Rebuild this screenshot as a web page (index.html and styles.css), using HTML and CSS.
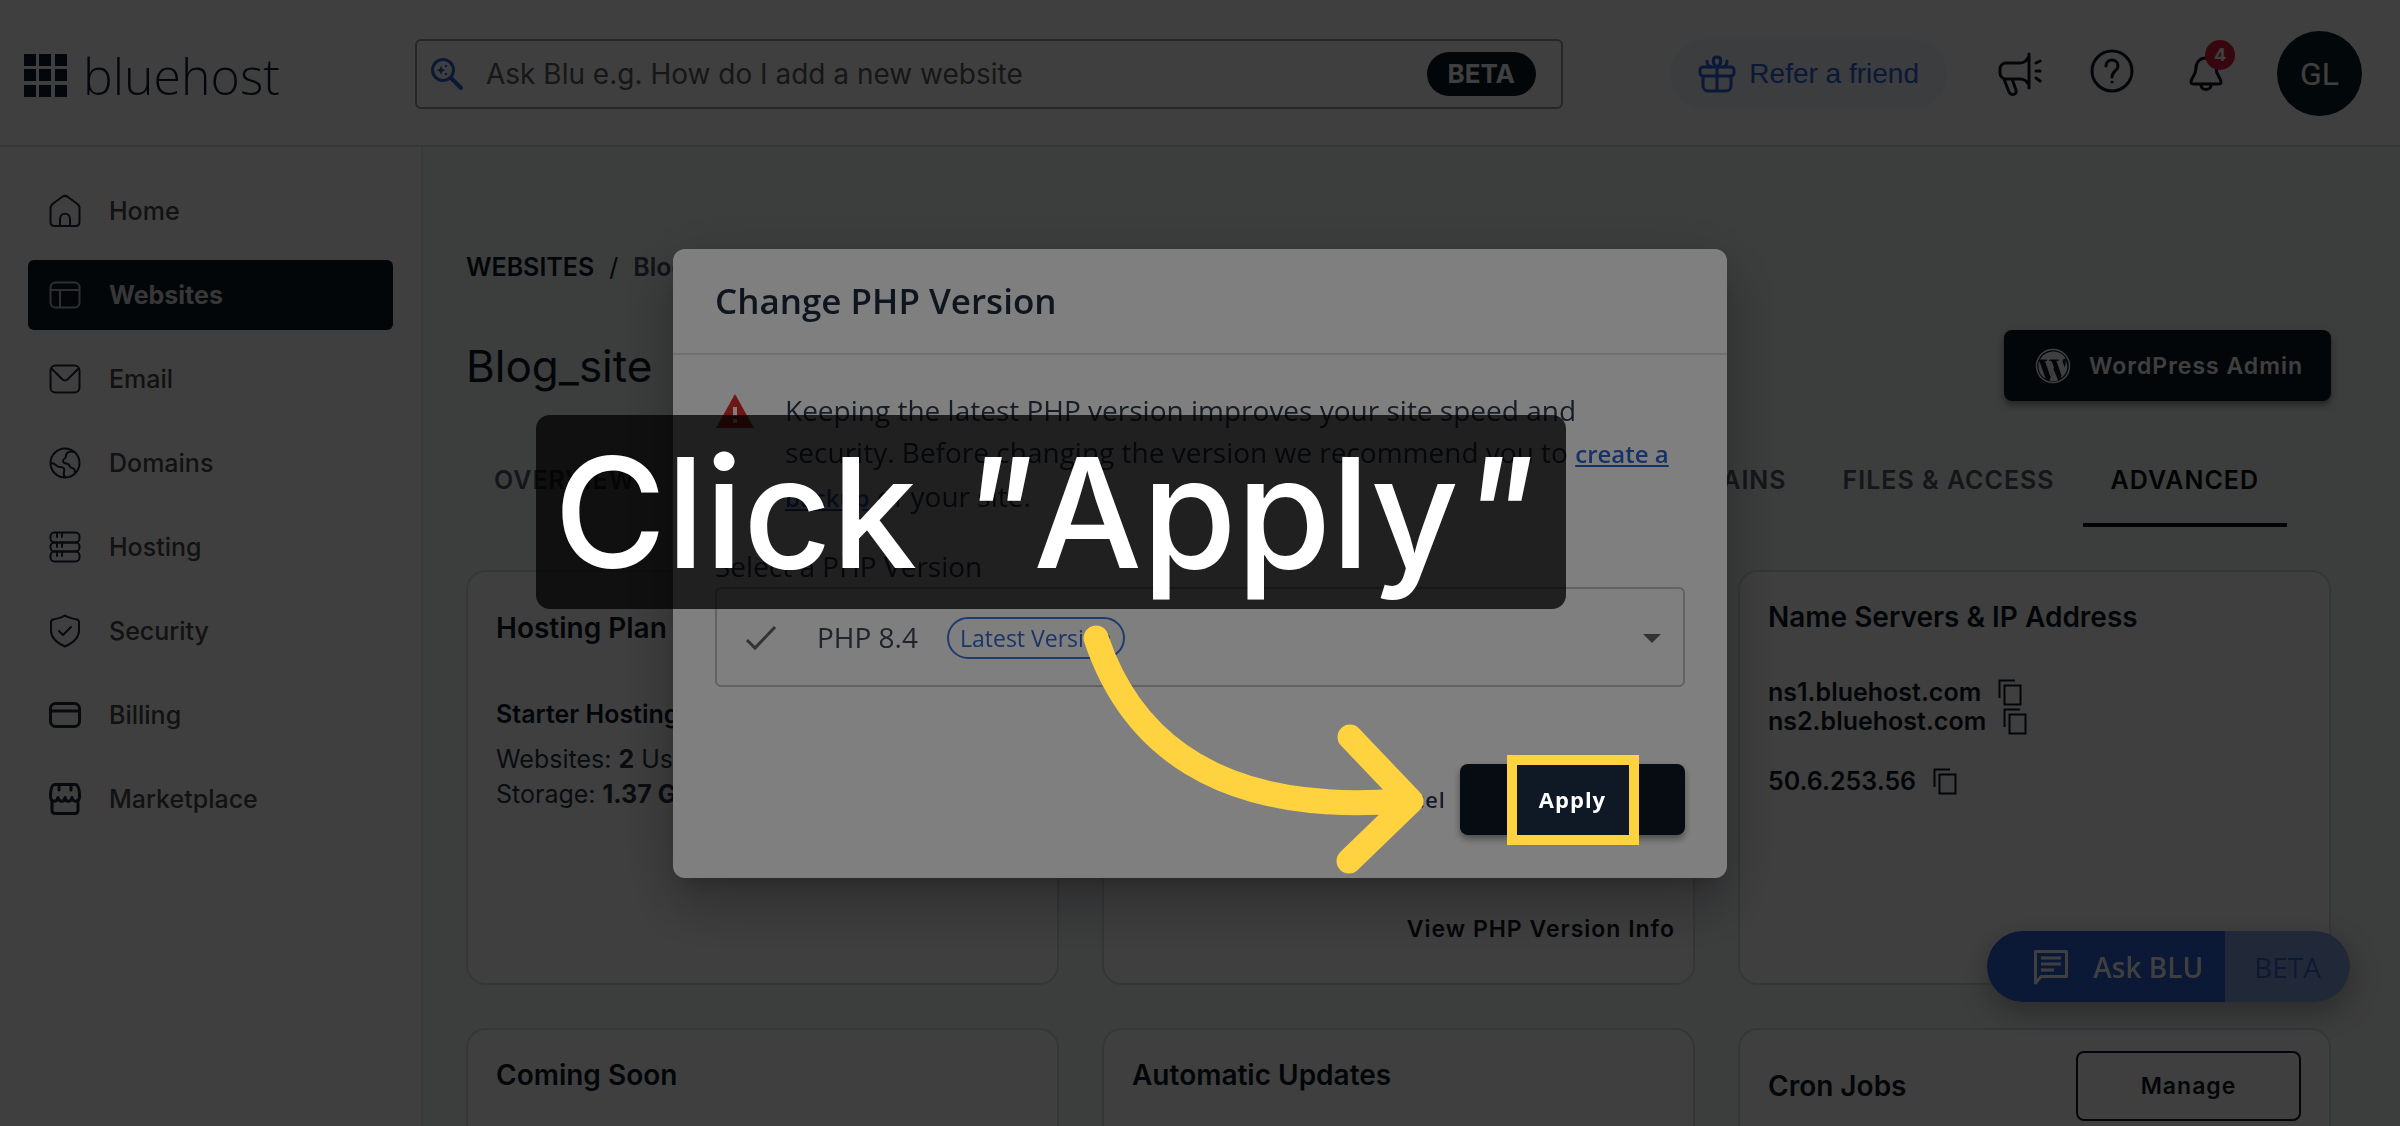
FILE: index.html
```html
<!DOCTYPE html>
<html lang="en">
<head>
  <meta charset="UTF-8" />
  <meta name="viewport" content="width=device-width, initial-scale=1.0" />
  <title>Blog_site - Advanced | Bluehost</title>
  <link rel="stylesheet" href="styles.css">
</head>
<body>
  <!-- Top Bar -->
  <header class="topbar">
    <a class="logo" href="#">
      <svg width="43" height="43" viewBox="0 0 43 43" fill="currentColor">
        <path d="M0 0h12v12H0zM15 0h12v12H15zM31 0h12v12H31zM0 15h12v12H0zM15 15h12v12H15zM31 15h12v12H31zM0 31h12v12H0zM15 31h12v12H15zM31 31h12v12H31z"/>
      </svg>
      <span>bluehost</span>
    </a>
    <div class="search">
      <svg width="34" height="34" viewBox="0 0 34 34" fill="none" stroke="currentColor" stroke-width="3" stroke-linecap="round">
        <circle cx="13" cy="13" r="10.500"/>
        <path d="M21 21l10 10" stroke-width="4"/>
        <path d="M11 9l1.500 3 3 1.200-3 1.200-1.500 3-1.500-3-3-1.200 3-1.200z" fill="currentColor" stroke="none"/>
        <circle cx="16" cy="9" r="1.300" fill="currentColor" stroke="none"/>
        <circle cx="16" cy="17" r="1.300" fill="currentColor" stroke="none"/>
      </svg>
      <input type="text" aria-label="Ask Blu" placeholder="Ask Blu e.g. How do I add a new website">
      <span class="beta">BETA</span>
    </div>
    <div class="actions">
      <a class="refer" href="#">
        <svg width="38" height="38" viewBox="0 0 38 38" fill="none" stroke="currentColor" stroke-width="3" stroke-linecap="round" stroke-linejoin="round">
          <rect x="2" y="12" width="34" height="9" rx="3"/>
          <path d="M5 21v10a5 5 0 0 0 5 5h18a5 5 0 0 0 5-5V21M19 12v24M19 12c-5-3-5-10 0-10s5 7 0 10M13 12c-3-1-4-3-4-6M25 12c3-1 4-3 4-6"/>
        </svg>
        <span>Refer a friend</span>
      </a>
      <button class="icon-btn" aria-label="Announcements">
        <svg width="44" height="44" viewBox="0 0 44 44" fill="none" stroke="currentColor" stroke-width="3" stroke-linecap="round" stroke-linejoin="round">
          <path d="M31 2v34M31 4c-2 5-5 7-9 7H8a6 6 0 0 0-6 6v4a6 6 0 0 0 6 6h14c4 0 7 2 9 6M6 27l5 13c2 4 8 3 7-2l-4-11"/>
          <path d="M38 11l4-2M38 19h4M38 26l4 3"/>
        </svg>
      </button>
      <button class="icon-btn help" aria-label="Help">
        <svg width="44" height="44" viewBox="0 0 44 44" fill="none" stroke="currentColor" stroke-width="3" stroke-linecap="round">
          <circle cx="22" cy="22" r="20"/>
          <path d="M16 17c0-8 12-8 12 0 0 5-6 5-6 11"/>
          <circle cx="22" cy="33" r="1" fill="currentColor" stroke-width="1"/>
        </svg>
      </button>
      <button class="icon-btn bell" aria-label="Notifications">
        <svg width="34" height="36" viewBox="0 0 34 36" fill="none" stroke="currentColor" stroke-width="3" stroke-linejoin="round">
          <path d="M17 2c-6 0-10 4-10 10 0 7-5 10-5 14 0 2 1 2 3 2h24c2 0 3 0 3-2 0-4-5-7-5-14 0-6-4-10-10-10zM12 29c0 6 10 6 10 0"/>
        </svg>
        <span class="count">4</span>
      </button>
      <button class="avatar">GL</button>
    </div>
  </header>

  <div class="layout">
    <!-- Sidebar -->
    <nav class="sidebar">
      <a href="#">
        <svg viewBox="0 0 32 32"><path d="M1.500 13c0-2 1-3 2-4L13 2c2-1.500 4-1.500 6 0l9.500 7c1 1 2 2 2 4v14c0 2.500-1.500 4-4 4h-21c-2.500 0-4-1.500-4-4zM11 31v-7c0-7 10-7 10 0v7"/></svg>
        Home
      </a>
      <a href="#" class="active">
        <svg viewBox="0 0 32 32"><rect x="1.500" y="3.500" width="29" height="25" rx="5"/><path d="M2 11h28M11 11v17"/></svg>
        Websites
      </a>
      <a href="#">
        <svg viewBox="0 0 32 32"><rect x="1.500" y="2.500" width="29" height="27" rx="5"/><path d="M3 6l10 10c2 2 4 2 6 0L29 6"/></svg>
        Email
      </a>
      <a href="#">
        <svg viewBox="0 0 32 32"><circle cx="16" cy="16" r="14.500"/><path d="M2 16c5 0 5 4 9 4s5 2 4 5 0 4 1 5M25 5c-4-1-8 0-8 4s-3 2-3 5 3 2 5 3 1 4 4 4 3 3 3 5"/></svg>
        Domains
      </a>
      <a href="#">
        <svg viewBox="0 0 32 32"><rect x="1.500" y="1.500" width="29" height="10" rx="4"/><rect x="1.500" y="11.500" width="29" height="9" rx="4"/><rect x="1.500" y="20.500" width="29" height="10" rx="4"/><path d="M8 2v4M13 2v4M8 12v4M13 12v4M8 21v4M13 21v4"/></svg>
        Hosting
      </a>
      <a href="#">
        <svg viewBox="0 0 32 34"><path d="M16 1.500c4 3 8 3 12 4 1.500.5 2 1.500 2 3v8c0 7-5 12-14 16-9-4-14-9-14-16v-8c0-1.500.5-2.500 2-3 4-1 8-1 12-4zM10 17l4 4 8-8"/></svg>
        Security
      </a>
      <a href="#">
        <svg viewBox="0 0 32 32" class="bold"><rect x="1.500" y="4.500" width="29" height="23" rx="5"/><path d="M2 12h28"/></svg>
        Billing
      </a>
      <a href="#">
        <svg viewBox="0 0 32 32" class="bold"><path d="M6 1.500h20c3 0 4.500 5 4.500 12 0 6-7 6-7.500 1-1 5-6.500 5-7 0-.5 5-6 5-7 0-.5 5-7.500 5-7.500-1C1.500 6.500 3 1.500 6 1.500zM3 18v9c0 2.500 1 3.500 3 3.500h20c2 0 3-1 3-3.500v-9M10 2v5M22 2v5"/></svg>
        Marketplace
      </a>
    </nav>

    <!-- Site Page -->
    <main class="content">
      <div class="breadcrumb">
        <a href="#">WEBSITES</a><span class="slash">/</span><span class="current">Blog_site</span>
      </div>
      <div class="title-row">
        <h1>Blog_site</h1>
        <button class="btn-dark wp-btn">
          <svg width="36" height="36" viewBox="0 0 36 36">
            <circle cx="18" cy="18" r="16.500" fill="none" stroke="#fff" stroke-width="1.500"/>
            <path fill="#fff" d="M5 11.500a15 15 0 0 1 26-1c-3 0-4 2-3 4.500 2 4 1.500 6 .5 9l-1.500 5-5.500-16h2v-1.500h-9V13h2l2.500 6.500L15.500 29 10 13h2v-1.500zM3.500 17c0-1.500.3-3 .8-4l6.500 18A15 15 0 0 1 3.500 17zM18.500 21l4.500 11.500c-3 1-6 1-8.500.3zM30.500 12c3.500 7 1.500 14-5 18.500L30 18c.7-2 .8-4 .5-6z"/>
          </svg>
          WordPress Admin
        </button>
      </div>
      <div class="tabs">
        <a href="#">OVERVIEW</a>
        <a href="#" class="push">DOMAINS</a>
        <a href="#">FILES &amp; ACCESS</a>
        <a href="#" class="active">ADVANCED</a>
      </div>
      <div class="cards">
        <section class="card">
          <div class="card-header with-action"><h2>Hosting Plan</h2></div>
          <h3>Starter Hosting</h3>
          <p>Websites: <b>2</b> Used</p>
          <p>Storage: <b>1.37 GB</b></p>
        </section>
        <section class="card php-card">
          <a class="text-link" href="#">View PHP Version Info</a>
        </section>
        <section class="card">
          <div class="card-header"><h2>Name Servers &amp; IP Address</h2></div>
          <div class="servers">
            <div class="server">ns1.bluehost.com
              <button class="copy" aria-label="Copy"><svg viewBox="0 0 24 27"><path d="M1.500 19V1.500H17M6.500 6.500h16v19h-16z"/></svg></button>
            </div>
            <div class="server">ns2.bluehost.com
              <button class="copy" aria-label="Copy"><svg viewBox="0 0 24 27"><path d="M1.500 19V1.500H17M6.500 6.500h16v19h-16z"/></svg></button>
            </div>
            <div class="server ip">50.6.253.56
              <button class="copy" aria-label="Copy"><svg viewBox="0 0 24 27"><path d="M1.500 19V1.500H17M6.500 6.500h16v19h-16z"/></svg></button>
            </div>
          </div>
        </section>
        <section class="card">
          <div class="card-header"><h2>Coming Soon</h2></div>
        </section>
        <section class="card">
          <div class="card-header"><h2>Automatic Updates</h2></div>
        </section>
        <section class="card">
          <div class="card-header with-action">
            <h2>Cron Jobs</h2>
            <button class="btn-outline">Manage</button>
          </div>
        </section>
      </div>
    </main>
  </div>

  <button class="ask-blu">
    <span class="ask-main">
      <svg width="36" height="36" viewBox="0 0 36 36" fill="none" stroke="currentColor" stroke-width="3">
        <path d="M2.500 34V2.500h31v25H8z" stroke-linejoin="round"/>
        <path d="M8 9h20M8 15h20M8 21h13"/>
      </svg>
      Ask BLU
    </span>
    <span class="ask-beta">BETA</span>
  </button>

  <!-- PHP Version Dialog -->
  <div class="backdrop">
    <div class="dialog" role="dialog" aria-labelledby="dialogTitle">
      <h2 class="dialog-title" id="dialogTitle">Change PHP Version</h2>
      <div class="dialog-body">
        <div class="notice">
          <svg width="40" height="36" viewBox="0 0 40 36">
            <path fill="#e02b2b" d="M20 1l19 34H1z"/>
            <path fill="#fff" d="M18 14h4v9h-4zM18 26h4v4h-4z"/>
          </svg>
          <p>Keeping the latest PHP version improves your site speed and security. Before changing the version we recommend you to <a href="#">create a backup</a> of your site.</p>
        </div>
        <label for="phpVersion">Select a PHP Version</label>
        <div class="select-box">
          <select id="phpVersion">
            <option>PHP 8.4</option>
          </select>
          <svg class="check" width="32" height="26" viewBox="0 0 32 26" fill="none" stroke="#666" stroke-width="3"><path d="M2 15l8 8L30 2"/></svg>
          <span class="chip">Latest Version</span>
          <span class="caret"></span>
        </div>
      </div>
      <div class="dialog-footer">
        <button class="btn-text">Cancel</button>
        <button class="btn-dark apply">Apply</button>
      </div>

      <!-- Guide step drawn over the dialog -->
      <div class="guide">
        <div class="spotlight"></div>
        <div class="callout">Click <i>"</i>Apply<i>"</i></div>
        <svg class="arrow" viewBox="0 0 360 270" fill="none" stroke="#ffd23f" stroke-width="25" stroke-linecap="round" stroke-linejoin="round">
          <path d="M23 29c34 102 119 177 304 163"/>
          <path d="M277 128l61 64-62 60"/>
        </svg>
      </div>
    </div>
  </div>
</body>
</html>
```
FILE: styles.css
```css
* {
  margin: 0;
  padding: 0;
  box-sizing: border-box;
}
body {
  font-family: Inter, Arial, sans-serif;
  font-size: 25px;
  color: #0f1825;
  background: #f2f4f7;
  height: 100vh;
  display: flex;
  flex-direction: column;
  overflow: hidden;
}
a {
  color: inherit;
  text-decoration: none;
}
button {
  font: inherit;
  color: inherit;
  background: none;
  border: none;
  cursor: pointer;
}
/* Top Bar */
.topbar {
  display: flex;
  align-items: center;
  flex: none;
  height: 147px;
  padding: 2px 38px 0 24px;
  background: #fff;
  border-bottom: 2px solid #dcdfe3;
}
.logo {
  display: flex;
  align-items: center;
  gap: 16px;
  width: 391px;
  padding-top: 4px;
  color: #0f1f33;
}
.logo span {
  font-family: "Open Sans", sans-serif;
  font-size: 50px;
  font-weight: 300;
  line-height: 64px;
}
.search {
  display: flex;
  align-items: center;
  width: 1148px;
  height: 70px;
  padding: 0 25px 0 13px;
  border: 2px solid #999;
  border-radius: 6px;
}
.search svg {
  color: #2f65dc;
}
.search input {
  flex: 1;
  margin-left: 22px;
  border: none;
  outline: none;
  background: none;
  font: 400 28px Inter, Arial, sans-serif;
}
.search input::placeholder {
  color: #5c5c5c;
}
.beta {
  padding: 0 21px;
  border-radius: 22px;
  background: #0f1825;
  color: #fff;
  font-weight: 700;
  font-size: 26px;
  line-height: 44px;
}
.actions {
  display: flex;
  align-items: center;
  margin-left: auto;
}
.refer {
  display: flex;
  align-items: center;
  gap: 13px;
  height: 70px;
  margin-right: 51px;
  padding: 0 28px;
  border-radius: 35px;
  background: #eef4fb;
  color: #2f60dc;
  font: 28px "Liberation Sans", Arial, sans-serif;
}
.icon-btn {
  position: relative;
  display: flex;
  margin-right: 48px;
}
.help {
  margin: 0 55px 6px 0;
}
.count {
  position: absolute;
  top: -16px;
  right: -12px;
  width: 30px;
  height: 30px;
  border-radius: 50%;
  background: #dc1f3c;
  color: #fff;
  font-size: 18px;
  font-weight: 700;
  line-height: 30px;
}
.avatar {
  width: 85px;
  height: 85px;
  border-radius: 50%;
  background: #0a2229;
  color: #fff;
  font: 32px Roboto, sans-serif;
}
.bell {
  margin-right: 54px;
}
/* Sidebar */
.layout {
  display: flex;
  flex: 1;
  min-height: 0;
}
.sidebar {
  display: flex;
  flex-direction: column;
  flex: none;
  gap: 14px;
  width: 423px;
  padding: 29px 28px;
  background: #fff;
  border-right: 2px solid #e4e7ea;
}
.sidebar a {
  display: flex;
  align-items: center;
  gap: 28px;
  height: 70px;
  padding-left: 21px;
  border-radius: 6px;
  color: #4a4a4a;
  font-weight: 500;
}
.sidebar svg {
  width: 32px;
  height: 34px;
  fill: none;
  stroke: #1c2736;
  stroke-width: 2;
  stroke-linecap: round;
  stroke-linejoin: round;
}
.sidebar svg.bold {
  stroke-width: 3;
}
.sidebar .active {
  background: #0f1825;
  color: #ddd;
  font-weight: 700;
}
.sidebar .active svg {
  stroke: #bbb;
}
/* Site Page */
.content {
  flex: 1;
  padding: 104px 69px 0 43px;
}
.breadcrumb {
  line-height: 32px;
  font-weight: 600;
}
.slash {
  margin: 0 15px;
  font-weight: 400;
}
.current {
  color: #444c5a;
}
.title-row {
  display: flex;
  align-items: center;
  justify-content: space-between;
  margin-top: 47px;
}
.title-row h1 {
  font-size: 44px;
  font-weight: 400;
}
.btn-dark {
  height: 71px;
  border-radius: 8px;
  background: #0f1825;
  color: #fff;
  font-weight: 600;
  letter-spacing: 1px;
  box-shadow: 0 4px 7px rgba(0,0,0,0.4);
}
.wp-btn {
  display: flex;
  align-items: center;
  gap: 18px;
  padding: 0 28px 0 31px;
  font-size: 23px;
}
.tabs {
  display: flex;
  margin: 41px 44px 43px 0;
}
.tabs a {
  height: 85px;
  padding: 0 28px;
  border-bottom: 4px solid transparent;
  color: #535a68;
  font-weight: 600;
  letter-spacing: 1px;
  line-height: 76px;
}
.tabs .push {
  margin-left: auto;
}
.tabs .active {
  border-color: #0c0f14;
  color: #0c0f14;
}
.cards {
  display: grid;
  grid-template-columns: repeat(3, 1fr);
  grid-auto-rows: 415px;
  gap: 43px;
}
.card {
  padding: 21px 28px;
  background: #fff;
  border: 2px solid #d6dadd;
  border-radius: 20px;
}
.card-header {
  display: flex;
  align-items: center;
  justify-content: space-between;
  min-height: 48px;
}
.card-header.with-action {
  min-height: 70px;
}
.card h2 {
  font-size: 28px;
  font-weight: 600;
}
.card h3 {
  margin: 33px 0 10px;
  font-size: 25px;
  font-weight: 600;
  line-height: 36px;
}
.card p {
  color: #2b3443;
  line-height: 35px;
}
.php-card {
  display: flex;
  align-items: flex-end;
  justify-content: flex-end;
  padding: 36px 18px;
}
.text-link {
  font-size: 23px;
  font-weight: 600;
  letter-spacing: 1px;
  line-height: 36px;
}
.servers {
  margin-top: 37px;
  font-weight: 600;
}
.server {
  display: flex;
  align-items: center;
  gap: 17px;
  line-height: 29px;
}
.server.ip {
  margin-top: 31px;
}
.copy {
  display: flex;
}
.copy svg {
  width: 24px;
  height: 27px;
  fill: none;
  stroke: currentColor;
  stroke-width: 2;
}
.btn-outline {
  width: 225px;
  height: 70px;
  border: 2px solid #0f1825;
  border-radius: 8px;
  font-size: 23px;
  font-weight: 600;
  letter-spacing: 1px;
}
/* Ask BLU Button */
.ask-blu {
  position: fixed;
  right: 50px;
  bottom: 124px;
  display: flex;
  height: 71px;
  border-radius: 36px;
  overflow: hidden;
  font-family: "Open Sans", sans-serif;
  font-size: 28px;
  box-shadow: 0 10px 30px rgba(0,0,0,0.3);
}
.ask-main,
.ask-beta {
  display: flex;
  align-items: center;
  height: 71px;
}
.ask-main {
  gap: 24px;
  padding: 0 22px 0 46px;
  background: #2d62d8;
  color: #fff;
  font-weight: 600;
}
.ask-beta {
  padding: 0 29px;
  background: #86a2e2;
  color: #3b68c8;
}
/* PHP Version Dialog */
.backdrop {
  position: fixed;
  inset: 0;
  display: flex;
  align-items: center;
  justify-content: center;
  background: rgba(0,0,0,0.5);
}
.dialog {
  position: relative;
  width: 1054px;
  background: #fff;
  border-radius: 12px;
  color: #2f3b50;
  font-family: "Open Sans", sans-serif;
  font-size: 28px;
  box-shadow: 0 15px 21px -10px rgba(0,0,0,0.2), 0 34px 53px 4px rgba(0,0,0,0.14), 0 13px 64px 11px rgba(0,0,0,0.12);
}
.dialog-title {
  padding: 0 42px;
  border-bottom: 2px solid #e0e0e0;
  color: #1d2a3e;
  font-size: 35px;
  font-weight: 600;
  line-height: 104px;
}
.dialog-body {
  padding: 34px 42px 0;
}
.notice {
  display: flex;
  gap: 30px;
  line-height: 42px;
}
.notice svg {
  flex: none;
  margin-top: 4px;
}
.notice a {
  color: #2f65cc;
  font-size: 24px;
  font-weight: 600;
  text-decoration: underline;
}
.dialog label {
  display: block;
  margin-top: 26px;
  line-height: 42px;
}
.select-box {
  position: relative;
}
.select-box select {
  appearance: none;
  display: block;
  width: 100%;
  height: 100px;
  padding-left: 100px;
  border: 2px solid #c4c4c4;
  border-radius: 6px;
  background: #fff;
  color: #3c4658;
  font: inherit;
}
.check {
  position: absolute;
  top: 38px;
  left: 30px;
}
.chip {
  position: absolute;
  top: 30px;
  left: 232px;
  padding: 0 11px;
  border: 2px solid #3f74d8;
  border-radius: 21px;
  color: #3568cc;
  font-size: 23px;
  font-weight: 500;
  line-height: 38px;
}
.caret {
  position: absolute;
  top: 47px;
  right: 24px;
  border: 9px solid transparent;
  border-top-color: #666;
  border-bottom: none;
}
.dialog-footer {
  display: flex;
  justify-content: flex-end;
  gap: 14px;
  padding: 77px 42px 43px;
  font-size: 22px;
}
.btn-text {
  padding: 0;
  font-weight: 600;
  letter-spacing: 1px;
}
.apply {
  width: 225px;
  font-weight: 700;
}
/* Guide step */
.guide {
  position: absolute;
  inset: 0;
  pointer-events: none;
}
.spotlight {
  position: absolute;
  right: 98px;
  bottom: 43px;
  width: 112px;
  height: 70px;
  outline: 10px solid #ffd23f;
  box-shadow: 0 0 0 4000px rgba(0,0,0,0.5);
}
.callout {
  position: absolute;
  top: 166px;
  left: -137px;
  width: 1030px;
  height: 194px;
  padding-left: 18px;
  border-radius: 14px;
  background: rgba(0,0,0,0.75);
  color: #fff;
  font: 500 153px/196px Inter, sans-serif;
  white-space: nowrap;
}
.arrow {
  position: absolute;
  top: 360px;
  left: 400px;
  width: 360px;
  height: 270px;
}
```
